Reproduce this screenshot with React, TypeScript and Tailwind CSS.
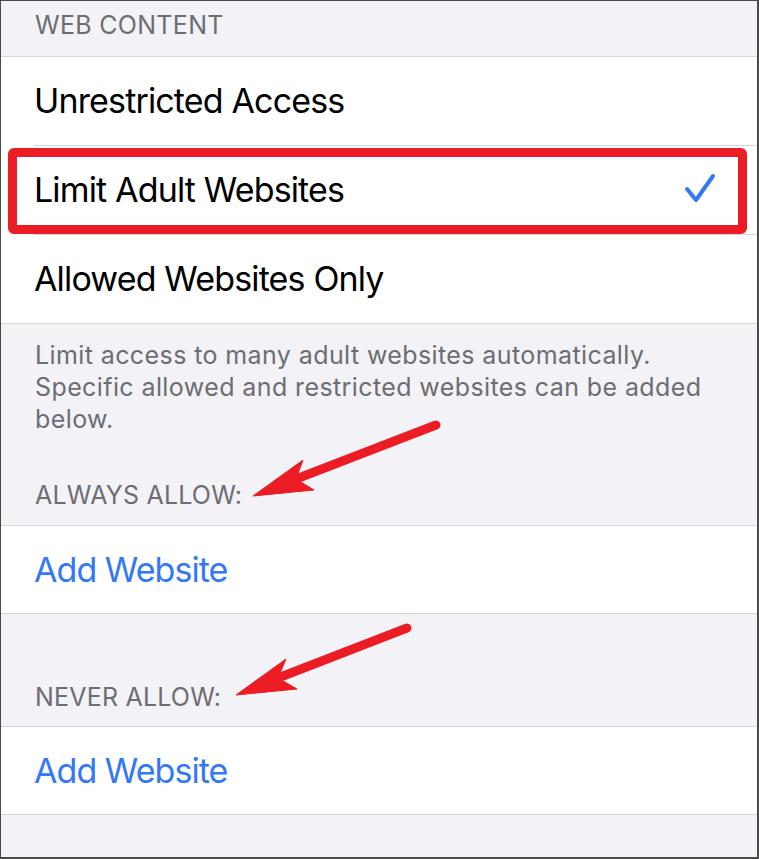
import React from 'react';

const font = {fontFamily: 'Inter, "Liberation Sans", sans-serif'};

function Check() {
    return (
        <svg width="34" height="34" viewBox="0 0 34 34" className="shrink-0">
            <path
                d="M5 16 L14 27 L31 3"
                fill="none"
                stroke="#3478f6"
                strokeWidth="4"
                strokeLinecap="round"
                strokeLinejoin="round"
            />
        </svg>
    );
}

type ArrowProps = {
    tail: [number, number];
    tip: [number, number];
    upper: [number, number];
    lower: [number, number];
    notch: [number, number];
};

function Arrow({tail, tip, upper, lower, notch}: ArrowProps) {
    return (
        <g fill="#ec1c24" stroke="#ec1c24">
            <line
                x1={tail[0]}
                y1={tail[1]}
                x2={notch[0]}
                y2={notch[1]}
                strokeWidth="9"
                strokeLinecap="round"
            />
            <polygon
                points={`${tip.join(',')} ${upper.join(',')} ${notch.join(',')} ${lower.join(',')}`}
                strokeWidth="1"
                strokeLinejoin="round"
            />
        </g>
    );
}

function OptionRow({label, checked, last}: {label: string; checked?: boolean; last?: boolean}) {
    return (
        <div className={'bg-white pl-[33px] ' + (last ? 'border-b border-[#d6d6da]' : '')}>
            <div
                className={
                    'flex items-center justify-between pr-[41px] ' +
                    (last ? 'h-[88px]' : 'h-[89px] border-b border-[#d6d6da]')
                }>
                <span className="text-[34px] leading-none tracking-[-0.85px] text-black">{label}</span>
                {checked && <Check/>}
            </div>
        </div>
    );
}

function AddRow() {
    return (
        <div className="bg-white border-b border-[#d6d6da] h-[88px] flex items-center pl-[33px]">
            <span className="text-[34px] leading-none tracking-[-0.95px] text-[#3478f6]">Add Website</span>
        </div>
    );
}

export default function App() {
    return (
        <div
            style={font}
            className="relative w-[759px] h-[859px] overflow-hidden bg-[#f2f2f7] border-t border-l border-r-2 border-b-2 border-[#4b4b4b]">
            <div className="h-[56px] border-b border-[#d6d6da] pl-[34px] pt-[12px]">
                <span className="text-[25px] leading-none tracking-[0.3px] text-[#6d6d72]">WEB CONTENT</span>
            </div>

            <OptionRow label="Unrestricted Access"/>
            <OptionRow label="Limit Adult Websites" checked/>
            <OptionRow label="Allowed Websites Only" last/>

            <div className="border-b border-[#d6d6da] pl-[34px] pt-[15px] pb-[17px]">
                <p className="text-[25px] leading-[32px] tracking-[0.4px] text-[#6d6d72] whitespace-nowrap">
                    Limit access to many adult websites automatically.
                    <br/>
                    Specific allowed and restricted websites can be added
                    <br/>
                    below.
                </p>
                <div className="mt-[48px] text-[25px] leading-none tracking-[0.2px] text-[#6d6d72]">
                    ALWAYS ALLOW:
                </div>
            </div>
            <AddRow/>

            <div className="border-b border-[#d6d6da] pl-[34px] pt-[71px] pb-[16px]">
                <div className="text-[25px] leading-none tracking-[0.2px] text-[#6d6d72]">NEVER ALLOW:</div>
            </div>
            <AddRow/>

            {/* annotation: red highlight box */}
            <div className="absolute left-[7px] top-[147px] w-[739px] h-[86px] border-[9px] border-[#ec1c24] rounded-[6px] pointer-events-none"/>

            {/* annotation: arrows */}
            <svg className="absolute left-0 top-0 pointer-events-none" width="759" height="859">
                <Arrow tail={[435, 424]} tip={[252, 495]} upper={[302, 459]} lower={[313, 489]} notch={[295, 478]}/>
                <Arrow tail={[406, 627]} tip={[235, 694]} upper={[285, 658]} lower={[296, 688]} notch={[277, 677]}/>
            </svg>
        </div>
    );
}
